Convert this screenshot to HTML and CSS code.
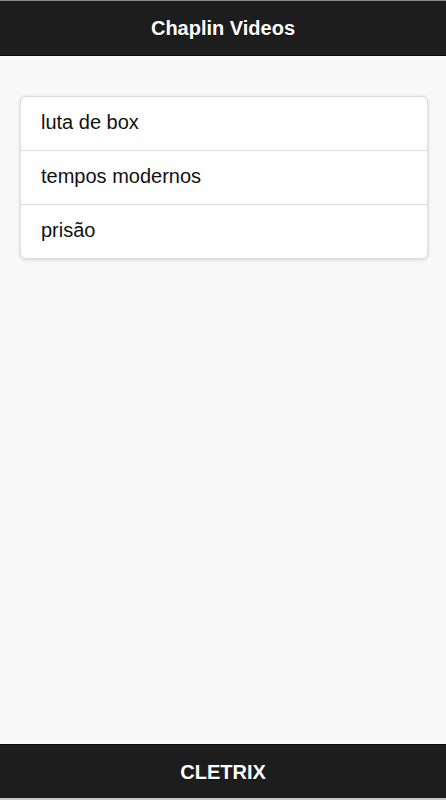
FILE: index.html
```html
<!DOCTYPE html>
<html>
<head>
<meta charset="utf-8">
<link rel="stylesheet" href="styles.css">
</head>
<body>
<div class="page">
  <header class="bar header"><h1>Chaplin Videos</h1></header>
  <main class="content">
    <ul class="list">
      <li>luta de box</li>
      <li>tempos modernos</li>
      <li>prisão</li>
    </ul>
  </main>
  <footer class="bar footer"><h1>CLETRIX</h1></footer>
</div>
</body>
</html>
```

FILE: styles.css
```css
* { box-sizing: border-box; }
html, body { margin: 0; padding: 0; height: 100%; }
body {
  font-family: "Liberation Sans", Arial, sans-serif;
  background: #f9f9f9;
  color: #333;
}
.page {
  display: flex;
  flex-direction: column;
  height: 800px;
}
.bar {
  background: #1d1d1d;
  color: #fff;
  display: flex;
  align-items: center;
  justify-content: center;
  text-shadow: 0 1px 0 #111;
}
.bar h1 {
  margin: 0;
  font-size: 20px;
  font-weight: bold;
  line-height: 26px;
}
.header {
  height: 56px;
  border-top: 1px solid #8a8a8a;
  border-bottom: 1px solid #0a0a0a;
}
.footer {
  height: 56px;
  border-top: 1px solid #0a0a0a;
  border-bottom: 2px solid #c8c8c8;
  margin-top: auto;
}
.content {
  padding: 40px 18px 0 20px;
  flex: 1;
}
.list {
  list-style: none;
  margin: 0;
  padding: 0;
  background: #fff;
  border: 1px solid #dcdcdc;
  border-radius: 6px;
  box-shadow: 0 1px 4px rgba(0,0,0,0.15);
  overflow: hidden;
}
.list li {
  font-size: 20px;
  line-height: 25px;
  padding: 13px 20px 15px 20px;
  color: #111;
  border-top: 1px solid #dcdcdc;
}
.list li:first-child { border-top: none; }
```
